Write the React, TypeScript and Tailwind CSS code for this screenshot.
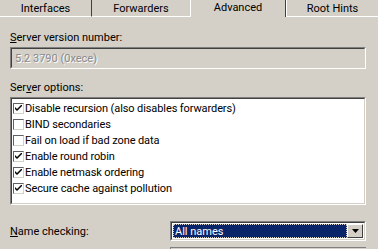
import React from 'react';

// ── Data ──────────────────────────────────────────────────────────
const tabs = [
  { label: 'Interfaces', w: 'w-[92px]', edge: 'border-r border-r-[#404040]' },
  { label: 'Forwarders', w: 'w-[98px]', edge: '' },
  { label: 'Advanced', w: 'w-[96px]', edge: '', active: true },
  { label: 'Root Hints', w: 'w-[92px]', edge: 'border-l border-l-white' },
];

const options = [
  { label: 'Disable recursion (also disables forwarders)', checked: true },
  { label: 'BIND secondaries', checked: false },
  { label: 'Fail on load if bad zone data', checked: false },
  { label: 'Enable round robin', checked: true },
  { label: 'Enable netmask ordering', checked: true },
  { label: 'Secure cache against pollution', checked: true },
];

// sunken 3D frame, classic look
const sunken =
  'border-t-[#808080] border-l-[#808080] border-b-white border-r-white border';
const sunkenInner =
  'border-t-[#404040] border-l-[#404040] border-b-[#d4d0c8] border-r-[#d4d0c8] border';

function CheckBox({ checked }: { checked: boolean }) {
  return (
    <div className="w-[11px] h-[11px] shrink-0 border border-t-[#606060] border-l-[#606060] border-b-[#d4d0c8] border-r-[#d4d0c8] bg-white flex items-center justify-center">
      {checked && (
        <svg width="7" height="7" viewBox="0 0 7 7" className="block">
          <path d="M0 2 L0 4 L2 6 L7 1 L7 -1 L2 4 Z" fill="#000" />
        </svg>
      )}
    </div>
  );
}

// ── Component ─────────────────────────────────────────────────────
export default function App() {
  return (
    <div
      className="w-[378px] h-[249px] overflow-hidden bg-[#d4d0c8] text-[11px] leading-[13px] text-black"
      style={{ fontFamily: 'Roboto, "Liberation Sans", Arial, sans-serif' }}
    >
      {/* ── Tab strip ── */}
      <div className="flex h-[17px] items-end">
        {tabs.map((t) =>
          t.active ? (
            <div
              key={t.label}
              className={`${t.w} h-[17px] border-l border-l-white border-r border-r-[#404040] flex justify-center pt-[1px]`}
            >
              {t.label}
            </div>
          ) : (
            <div
              key={t.label}
              className={`${t.w} h-[17px] border-b border-b-white ${t.edge} flex justify-center pt-[2px]`}
            >
              {t.label}
            </div>
          )
        )}
      </div>

      {/* ── Body ── */}
      <div className="pl-[10px] pr-[12px] flex flex-col">
        <div className="mt-[14px] h-[13px]">
          <span className="underline underline-offset-1">S</span>erver version number:
        </div>

        <div className={`${sunken} mt-[3px] h-[22px]`}>
          <div className={`${sunkenInner} h-full flex items-center pl-[3px] text-[#8a8a8a] [text-shadow:1px_1px_0_#fff]`}>
            5.2 3790 (0xece)
          </div>
        </div>

        <div className="mt-[12px] h-[13px]">
          Ser<span className="underline underline-offset-1">v</span>er options:
        </div>

        <div className={`${sunken} mt-[3px] h-[108px]`}>
          <div className={`${sunkenInner} h-full bg-white pt-[1px] pl-[1px] tracking-[-0.1px]`}>
            {options.map((o) => (
              <div key={o.label} className="flex items-center gap-[1px] h-[16px]">
                <CheckBox checked={o.checked} />
                <span className="whitespace-nowrap">{o.label}</span>
              </div>
            ))}
          </div>
        </div>

        {/* ── Name checking ── */}
        <div className="mt-[16px] flex items-center">
          <div className="w-[160px]">
            <span className="underline underline-offset-1">N</span>ame checking:
          </div>
          <div className={`${sunken} flex-1 h-[20px]`}>
            <div className={`${sunkenInner} h-full bg-white flex p-[1px]`}>
              <div className="flex-1 bg-[#0a246a] text-white border border-dotted border-[#d4d0c8] flex items-center pl-[1px]">
                All names
              </div>
              <div className="w-[16px] h-full border border-t-white border-l-white border-b-[#404040] border-r-[#404040] bg-[#d4d0c8] flex items-center justify-center">
                <svg width="7" height="4" viewBox="0 0 7 4" className="block">
                  <path d="M0 0 H7 L3.5 4 Z" fill="#000" />
                </svg>
              </div>
            </div>
          </div>
        </div>

        {/* partially visible control below */}
        <div className="mt-[6px] ml-[160px] h-[6px] border-t border-t-[#808080] border-l border-l-[#808080]" />
      </div>
    </div>
  );
}
